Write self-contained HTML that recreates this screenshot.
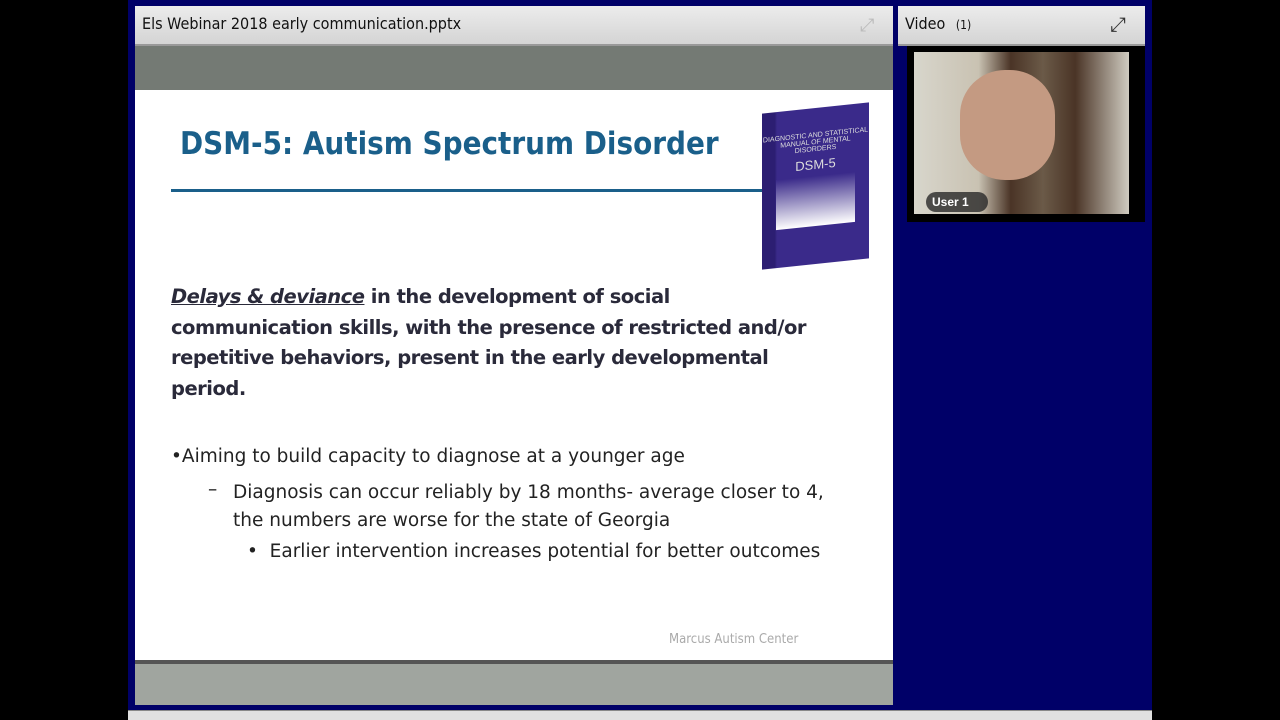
<!DOCTYPE html>
<html><head><style>
body{margin:0;width:1280px;height:720px;background:#000;position:relative;overflow:hidden;font-family:"Liberation Sans",sans-serif}
div{position:absolute;box-sizing:border-box}
.hdr{background:linear-gradient(#ececec,#d4d4d4);border-bottom:2px solid #999;font-size:16px;color:#111;padding:8px 7px;font-family:"DejaVu Sans Condensed","Liberation Sans Narrow",sans-serif}
.sl{font-family:"DejaVu Sans","Liberation Sans",sans-serif;color:#222}
</style></head><body>
<div style="left:128px;top:0;width:1024px;height:710px;background:#000068"></div>
<div style="left:128px;top:710px;width:1024px;height:10px;background:#e0e0e0;border-top:1px solid #888"></div>
<div class="hdr" style="left:135px;top:6px;width:758px;height:40px">Els Webinar 2018 early communication.pptx</div>
<div style="left:860px;top:15px;width:20px;height:20px;color:#bbb;font-size:18px;line-height:20px">⤢</div>
<div class="hdr" style="left:898px;top:6px;width:247px;height:40px">Video <span style="font-size:12px;margin-left:6px">(1)</span></div>
<div style="left:1110px;top:14px;width:22px;height:22px;color:#333;font-size:20px;line-height:22px">⤢</div>
<div style="left:135px;top:46px;width:758px;height:44px;background:#747a74"></div>
<div style="left:135px;top:90px;width:758px;height:570px;background:#fff"></div>
<div style="left:135px;top:660px;width:758px;height:4px;background:#555"></div>
<div style="left:135px;top:664px;width:758px;height:41px;background:#a0a59f"></div>
<div style="left:907px;top:46px;width:238px;height:176px;background:#000"></div>
<div style="left:914px;top:52px;width:215px;height:162px;background:linear-gradient(90deg,#d8d6cc 0%,#c9c2b2 30%,#4a3426 45%,#6b5a48 60%,#4a3426 75%,#cfcbc0 100%)"></div>
<div style="left:960px;top:70px;width:95px;height:110px;border-radius:45px;background:#c49a82"></div>
<div style="left:926px;top:192px;width:62px;height:20px;border-radius:10px;background:rgba(40,40,40,.8);color:#fff;font-size:12px;font-weight:bold;padding:3px 6px">User 1</div>
<div class="sl" style="left:180px;top:126px;font-size:31px;font-weight:bold;color:#1a5f8a;font-family:'DejaVu Sans Condensed','DejaVu Sans',sans-serif">DSM-5: Autism Spectrum Disorder</div>
<div style="left:171px;top:189px;width:600px;height:3px;background:#1a5f8a"></div>
<div style="left:762px;top:108px;width:107px;height:156px;background:linear-gradient(90deg,#2c1e72 0,#2c1e72 12%,#3a2a8a 14%,#3a2a8a 100%);transform:skewY(-6deg);color:#ddd;font-size:7px;text-align:center;padding-top:24px">DIAGNOSTIC AND STATISTICAL MANUAL OF MENTAL DISORDERS<div style="position:static;font-size:13px;margin:4px 0">DSM-5</div><div style="position:static;margin:0 14px;height:50px;background:linear-gradient(#3a2a8a,#fff)"></div></div>
<div class="sl" style="left:171px;top:282px;width:700px;white-space:nowrap;font-size:19.5px;letter-spacing:-0.5px;font-weight:bold;line-height:30.5px;color:#2a2a3a"><i style="text-decoration:underline">Delays &amp; deviance</i> in the development of social<br>communication skills, with the presence of restricted and/or<br>repetitive behaviors, present in the early developmental<br>period.</div>
<div class="sl" style="left:171px;top:446px;font-size:18.5px">•Aiming to build capacity to diagnose at a younger age</div>
<div class="sl" style="left:208px;top:479px;font-size:18.5px">–</div>
<div class="sl" style="left:233px;top:479px;width:620px;font-size:18.5px;line-height:28px">Diagnosis can occur reliably by 18 months- average closer to 4, the numbers are worse for the state of Georgia</div>
<div class="sl" style="left:247px;top:541px;font-size:18.5px">•&nbsp; Earlier intervention increases potential for better outcomes</div>
<div style="left:669px;top:632px;font-size:13px;color:#aaa;font-family:'DejaVu Sans Condensed',sans-serif">Marcus Autism Center</div>
</body></html>
